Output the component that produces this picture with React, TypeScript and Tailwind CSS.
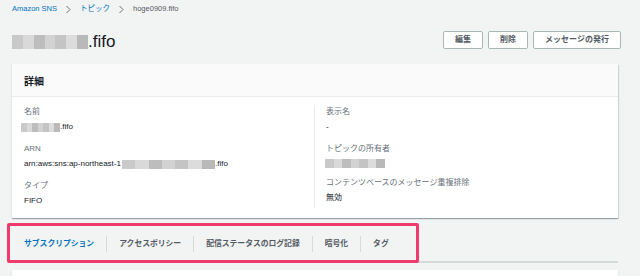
import React from 'react';

const jp = "font-['Liberation_Sans','Noto_Sans_CJK_JP',sans-serif]";

// mosaic stand-in for the redacted values
function Redacted({ className }: { className: string }) {
  return (
    <span
      className={`inline-flex overflow-hidden blur-[0.6px] align-middle ${className}`}
    >
      <span className="flex-1 bg-[#c9c9c9]" />
      <span className="flex-1 bg-[#d9d9d9]" />
      <span className="flex-1 bg-[#bdbdbd]" />
      <span className="flex-1 bg-[#d2d2d2]" />
      <span className="flex-1 bg-[#c4c4c4]" />
      <span className="flex-1 bg-[#dcdcdc]" />
      <span className="flex-1 bg-[#b9b9b9]" />
    </span>
  );
}

function Field({ label, children }: { label: string; children: React.ReactNode }) {
  return (
    <div className="flex flex-col">
      <div className="text-[8px] leading-[14px] text-[#687078]">{label}</div>
      <div className="text-[8px] leading-[14px] text-[#16191f] flex items-center mt-[1px]">{children}</div>
    </div>
  );
}

const tabs = ['サブスクリプション', 'アクセスポリシー', '配信ステータスのログ記録', '暗号化', 'タグ'];

export default function App() {
  return (
    <div className={`w-[640px] h-[276px] overflow-hidden bg-[#f2f3f3] ${jp}`}>
      <div className="pl-[12px] pr-[22px]">
        {/* breadcrumb */}
        <div className="flex items-center gap-[8px] h-[18px] text-[7.5px]">
          <span className="text-[#0073bb]">Amazon SNS</span>
          <svg width="7" height="9" viewBox="0 0 7 9" className="text-[#687078]">
            <path d="M1.5 1 L5 4.5 L1.5 8" fill="none" stroke="currentColor" strokeWidth="1" />
          </svg>
          <span className="text-[#0073bb]">トピック</span>
          <svg width="7" height="9" viewBox="0 0 7 9" className="text-[#687078]">
            <path d="M1.5 1 L5 4.5 L1.5 8" fill="none" stroke="currentColor" strokeWidth="1" />
          </svg>
          <span className="text-[#545b64]">hoge0909.fifo</span>
        </div>

        {/* title row */}
        <div className="flex items-center justify-between mt-[12px] h-[20px]">
          <div className="flex items-center text-[17px] text-[#16191f] mt-[4px]">
            <Redacted className="w-[76px] h-[14px]" />
            <span>.fifo</span>
          </div>
          <div className="flex gap-[5px] mr-[-3px]">
            <button className="h-[18px] w-[40px] border border-[#aab7b8] rounded-[2px] bg-white text-[8px] font-bold text-[#545b64]">
              編集
            </button>
            <button className="h-[18px] w-[40px] border border-[#aab7b8] rounded-[2px] bg-white text-[8px] font-bold text-[#545b64]">
              削除
            </button>
            <button className="h-[18px] w-[88px] border border-[#aab7b8] rounded-[2px] bg-white text-[8px] font-bold text-[#545b64]">
              メッセージの発行
            </button>
          </div>
        </div>

        {/* details card */}
        <div className="mt-[14px] bg-white shadow-[0_1px_1px_rgba(0,28,36,0.3),1px_1px_1px_rgba(0,28,36,0.1)]">
          <div className="h-[33px] bg-[#fafafa] border-b border-[#eaeded] flex items-center px-[12px] pt-[3px] text-[10px] font-bold text-[#16191f]">
            詳細
          </div>
          <div className="flex pt-[8px] pb-[10px]">
            <div className="w-[303px] pl-[12px] flex flex-col gap-[8px] border-r border-[#eaeded]">
              <Field label="名前">
                <Redacted className="w-[39px] h-[9px] -ml-[3px]" />
                <span>.fifo</span>
              </Field>
              <Field label="ARN">
                <span>arn:aws:sns:ap-northeast-1</span>
                <Redacted className="w-[93px] h-[9px] ml-[1px]" />
                <span>.fifo</span>
              </Field>
              <Field label="タイプ">
                <span>FIFO</span>
              </Field>
            </div>
            <div className="pl-[11px] flex flex-col gap-[8px]">
              <Field label="表示名">
                <span>-</span>
              </Field>
              <Field label="トピックの所有者">
                <Redacted className="w-[60px] h-[9px] -ml-[1px] mt-[2px]" />
              </Field>
              <Field label="コンテンツベースのメッセージ重複排除">
                <span>無効</span>
              </Field>
            </div>
          </div>
        </div>

        {/* tabs */}
        <div className="relative mt-[5px] flex items-center h-[40px] pt-[4px] border-b-[2px] border-[#d5dbdb] pl-[12px]">
          {tabs.map((t, i) => (
            <React.Fragment key={t}>
              {i > 0 && <span className="w-px h-[16px] bg-[#d5dbdb]" />}
              <span
                className={`px-[12px] text-[7.8px] font-bold ${i === 0 ? 'text-[#0073bb] pl-0' : 'text-[#545b64]'}`}
              >
                {t}
              </span>
            </React.Fragment>
          ))}
          <div className="absolute left-[-5px] top-[0px] w-[412px] h-[40px] border-[3px] border-[#ee3a6d] rounded-[2px]" />
        </div>

        <div className="mt-[7px] h-[20px] bg-white shadow-[0_1px_1px_rgba(0,28,36,0.3)]" />
      </div>
    </div>
  );
}
